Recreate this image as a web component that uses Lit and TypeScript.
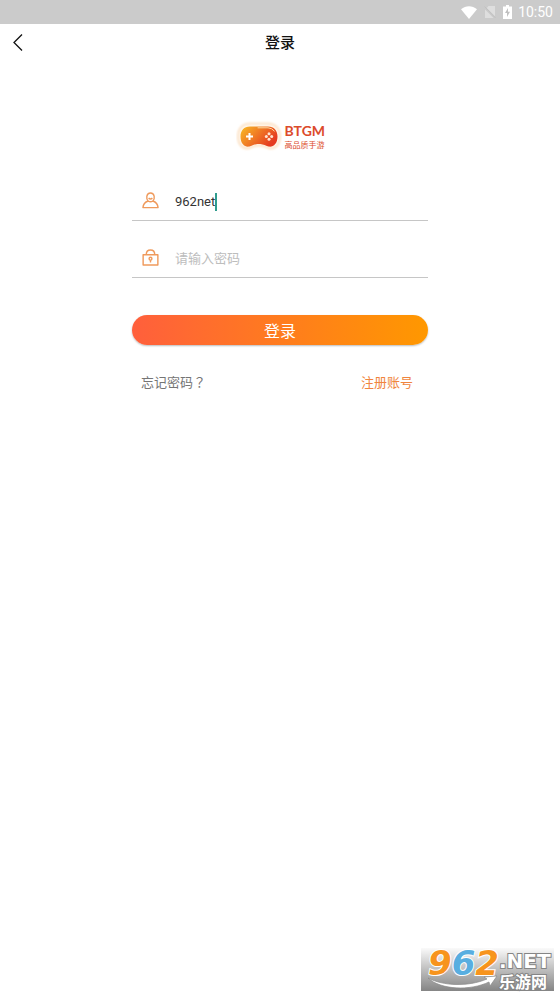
import { LitElement, html, css } from "lit";
import { customElement, state } from "lit/decorators.js";

@customElement("status-bar")
class StatusBar extends LitElement {
  static styles = css`
    :host {
      display: flex;
      justify-content: flex-end;
      align-items: center;
      height: 24px;
      padding-right: 7px;
      background: #cbcbcb;
      color: #fff;
      font: 14px/24px Roboto, sans-serif;
    }
    .wifi { margin-right: 7px; }
    .sim { margin-right: 7px; }
    .battery { margin-right: 6px; }
  `;
  render() {
    return html`
      <svg class="wifi" width="16" height="13" viewBox="0 0 16 13" aria-hidden="true">
        <path fill="#fff" d="M0 3.2C4.8-.9 11.2-.9 16 3.2L8 13Z" />
      </svg>
      <svg class="sim" width="12" height="14" viewBox="0 0 12 14" aria-hidden="true">
        <path fill="#dedede" d="M4.5 1H11v10.2L2.800 3ZM1 4.5 9.500 13H1Z" />
        <path d="M.5 1.5 11.5 13" stroke="#c0c0c0" fill="none" />
      </svg>
      <svg class="battery" width="9" height="14" viewBox="0 0 9 14" aria-hidden="true">
        <path fill="#fff" d="M3 0h3v1.5h3V14H0V1.5h3Z" />
        <path fill="#c0c0c0" d="M5 3 2 8h2v4l3-5.2H5Z" />
      </svg>
      <span>10:50</span>
    `;
  }
}

@customElement("brand-logo")
class BrandLogo extends LitElement {
  static styles = css`
    :host {
      display: flex;
      align-items: center;
      gap: 3px;
      color: #dc4b2b;
    }
    .words { display: flex; flex-direction: column; width: 40px; }
    .name { font: bold 14px/17px Lato, sans-serif; }
    .motto { font: 8px/12px "Noto Sans CJK SC", sans-serif; }
  `;
  render() {
    return html`
      <svg width="46" height="36" viewBox="0 0 46 36" aria-hidden="true">
        <defs>
          <linearGradient id="pad" x1="0" y1="0" x2="1" y2=".5">
            <stop offset="0" stop-color="#f8bd24" />
            <stop offset=".5" stop-color="#f07b25" />
            <stop offset="1" stop-color="#e53a20" />
          </linearGradient>
          <filter id="glow" x="-20%" y="-20%" width="140%" height="140%">
            <feGaussianBlur stdDeviation=".8" />
          </filter>
        </defs>
        <path filter="url(#glow)" fill="#fff8ee" stroke="#fbd9b4" stroke-width="1.5"
          d="M14 5.500H32C39 5.500 44 10 44 18.500C44 28 38 32 32.500 30C28 28 27 27.500 23 27.500C19 27.500 18 28 13.500 30C8 32 2 28 2 18.500C2 10 7 5.500 14 5.500Z" />
        <path fill="url(#pad)"
          d="M14 8.500H32C38 8.500 41.500 12.500 41.500 18.500C41.500 26 37 29.500 32.500 28.500C28 27 27 26 23 26C19 26 18 27 13.500 28.500C9 29.500 4.500 26 4.500 18.500C4.500 12.500 8 8.500 14 8.500Z" />
        <path fill="none" stroke="#fcd9a2" stroke-width="1" stroke-linecap="round" d="M22 9.800H32Q36 10 38.300 13" />
        <path fill="none" stroke="#fff" stroke-width="2" d="M13.500 15v7M10 18.500h7" />
        <g fill="#ffe3d0">
          <circle cx="33" cy="15.800" r="1.500" /><circle cx="33" cy="21.200" r="1.500" />
          <circle cx="30.300" cy="18.500" r="1.500" /><circle cx="35.700" cy="18.500" r="1.500" />
        </g>
      </svg>
      <div class="words">
        <span class="name">BTGM</span>
        <span class="motto">高品质手游</span>
      </div>
    `;
  }
}

@customElement("site-mark")
class SiteMark extends LitElement {
  static styles = css`
    :host {
      display: grid;
      grid-template-columns: auto auto;
      justify-content: start;
      box-sizing: border-box;
      width: 133px;
      height: 43px;
      padding-left: 7px;
      background: linear-gradient(#fafafa, #c4c4c4 45%, #858585);
      white-space: nowrap;
    }
    .digits {
      font: italic bold 34px/31px "DejaVu Sans", sans-serif;
      color: #f7941d;
      -webkit-text-stroke: 2px #fff;
      paint-order: stroke fill;
    }
    .six { color: #58aee0; }
    .right { display: flex; flex-direction: column; color: #fff; padding-top: 2px; }
    .net {
      font: bold 20px/23px "DejaVu Sans", sans-serif;
      -webkit-text-stroke: 2px #858585;
      paint-order: stroke fill;
    }
    .cn {
      font: bold 16px/16px "Noto Sans CJK SC", sans-serif;
      -webkit-text-stroke: 2px #858585;
      paint-order: stroke fill;
    }
    .left { display: flex; flex-direction: column; width: 71px; }
    .swoosh { overflow: visible; }
  `;
  render() {
    return html`
      <div class="left">
        <span class="digits">9<span class="six">6</span>2</span>
        <svg class="swoosh" width="70" height="12" viewBox="0 0 70 12" aria-hidden="true">
          <path fill="#fff" stroke="#8a8a8a" stroke-width=".7"
            d="M0-1C15 7 40 8 59 0L56-2 69-3 62 7 61 3C42 12 13 11 0-1Z" />
        </svg>
      </div>
      <div class="right">
        <span class="net">.NET</span>
        <span class="cn">乐游网</span>
      </div>
    `;
  }
}

@customElement("app-root")
class AppRoot extends LitElement {
  @state() private account = "962net";

  static styles = css`
    :host {
      display: block;
      position: relative;
      min-height: 100vh;
      background: #fff;
      font-family: Roboto, "Noto Sans CJK SC", sans-serif;
      color: #333;
    }
    * { box-sizing: border-box; }
    .nav {
      display: grid;
      grid-template-columns: 36px 1fr 36px;
      align-items: center;
      height: 37px;
    }
    .back {
      display: flex;
      justify-content: center;
      padding: 0;
      border: 0;
      background: none;
    }
    .title {
      margin: 0;
      font-size: 15px;
      font-weight: 500;
      line-height: 20px;
      text-align: center;
      color: #111;
    }
    .logo { justify-content: center; margin-top: 57px; }
    form {
      width: 296px;
      max-width: 100%;
      margin: 24px auto 0;
    }
    .field {
      display: flex;
      align-items: center;
      height: 43px;
      border-bottom: 1px solid #c6c6c6;
      padding: 5px 10px 0;
    }
    .field + .field { margin-top: 14px; }
    .field label { display: flex; margin-right: 16px; padding-bottom: 2px; }
    input {
      border: 0;
      outline: 0;
      padding: 0;
      background: none;
      font: 13px/20px Roboto, "Noto Sans CJK SC", sans-serif;
      color: #333;
    }
    .account { field-sizing: content; }
    .password { flex: 1; min-width: 0; }
    .password::placeholder { color: #bdbdbd; opacity: 1; }
    .caret { width: 2px; height: 18px; background: #2f9c8d; }
    .submit {
      display: block;
      width: 100%;
      height: 30px;
      margin-top: 37px;
      padding: 0;
      border: 0;
      border-radius: 15px;
      background: linear-gradient(90deg, #ff5f3c, #ff9800);
      box-shadow: 0 1px 2px #00000044;
      font: 16px/30px "Noto Sans CJK SC", sans-serif;
      color: #fff;
    }
    .links {
      display: flex;
      justify-content: space-between;
      align-items: baseline;
      padding: 27px 15px 0 9px;
      font-size: 13px;
      line-height: 20px;
    }
    .links a { text-decoration: none; color: #757575; }
    .links .register { color: #f0853e; }
    .question { font-family: "Noto Sans CJK TC", sans-serif; }
    .mark { position: absolute; right: 6px; bottom: 6px; }
  `;

  render() {
    return html`
      <status-bar></status-bar>
      <header class="nav">
        <button class="back" aria-label="返回">
          <svg width="10" height="18" viewBox="0 0 10 18" fill="none" stroke="#111" stroke-width="1.300">
            <path d="M9 .5 1 8.500l8 8" />
          </svg>
        </button>
        <h1 class="title">登录</h1>
      </header>
      <brand-logo class="logo"></brand-logo>
      <form @submit=${(e: Event) => e.preventDefault()}>
        <div class="field">
          <label for="account" aria-label="账号">
            <svg width="17" height="17" viewBox="0 0 18 18" fill="none" stroke="#ef9a5c" stroke-width="1.500" stroke-linejoin="round">
              <path d="M6.500 9.500C4.200 7.500 4.300 1 9 1S13.800 7.500 11.500 9.500C14.500 10.500 16.700 12.500 17 16.500H1C1.300 12.500 3.500 10.500 6.500 9.500ZM6.500 9.500Q9 11.300 11.500 9.500M7 6.500Q9 8.300 11 6.500" />
            </svg>
          </label>
          <input class="account" id="account" type="text" .value=${this.account}
            @input=${(e: Event) => { this.account = (e.target as HTMLInputElement).value; }} />
          <span class="caret"></span>
        </div>
        <div class="field">
          <label for="password" aria-label="密码">
            <svg width="17" height="17" viewBox="0 0 18 18" fill="none" stroke="#ef9a5c" stroke-width="1.500" stroke-linejoin="round">
              <path d="M1.200 6H16.800V17H1.200ZM4.500 6C4.500-.7 13.500-.7 13.500 6" />
              <circle cx="9" cy="10.300" r="1.500" /><path d="M9 11.800v2.500" />
            </svg>
          </label>
          <input class="password" id="password" type="password" placeholder="请输入密码" />
        </div>
        <button class="submit" type="submit">登录</button>
        <nav class="links">
          <a href="#forgot">忘记密码<span class="question" lang="zh-Hant">？</span></a>
          <a class="register" href="#register">注册账号</a>
        </nav>
      </form>
      <site-mark class="mark"></site-mark>
    `;
  }
}
